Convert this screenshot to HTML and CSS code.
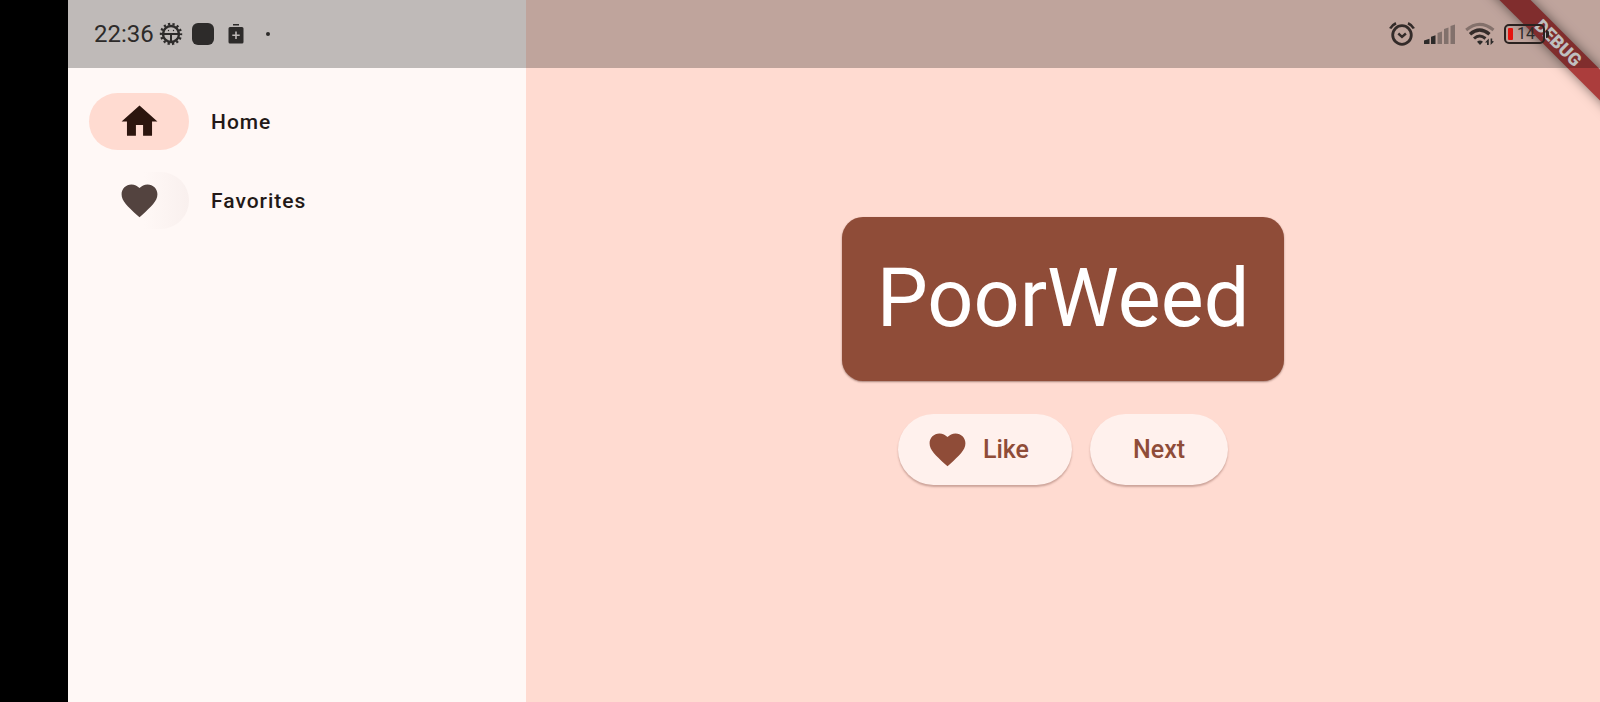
FILE: index.html
```html
<!DOCTYPE html>
<html lang="en">
<head>
<meta charset="utf-8">
<title>PoorWeed</title>
<link rel="stylesheet" href="styles.css">
</head>
<body>
<div class="screen">
  <div class="cutout"></div>
  <div class="app">
    <nav class="rail" aria-label="Main">
      <button class="rail-item rail-item-selected" type="button">
        <span class="indicator"><svg class="icon" viewBox="0 0 24 24" aria-hidden="true"><path d="M10 20v-6h4v6h5v-8h3L12 3 2 12h3v8z"/></svg></span>
        <span>Home</span>
      </button>
      <button class="rail-item" type="button">
        <span class="indicator indicator-fading"><svg class="icon" viewBox="0 0 24 24" aria-hidden="true"><path d="M12 21.35l-1.45-1.32C5.4 15.36 2 12.28 2 8.5 2 5.42 4.42 3 7.5 3c1.74 0 3.41.81 4.5 2.09C13.09 3.81 14.76 3 16.5 3 19.58 3 22 5.42 22 8.5c0 3.78-3.4 6.86-8.55 11.54L12 21.35z"/></svg></span>
        <span>Favorites</span>
      </button>
    </nav>
    <main class="page">
      <h1 class="card">PoorWeed</h1>
      <div class="actions">
        <button class="action action-icon" type="button">
          <svg class="icon" viewBox="0 0 24 24" aria-hidden="true"><path d="M12 21.35l-1.45-1.32C5.4 15.36 2 12.28 2 8.5 2 5.42 4.42 3 7.5 3c1.74 0 3.41.81 4.5 2.09C13.09 3.81 14.76 3 16.5 3 19.58 3 22 5.42 22 8.5c0 3.78-3.4 6.86-8.55 11.54L12 21.35z"/></svg>
          <span>Like</span>
        </button>
        <button class="action" type="button">Next</button>
      </div>
    </main>
    <div class="banner"><span class="ribbon">DEBUG</span></div>
    <header class="status">
      <div class="status-group">
        <time class="clock">22:36</time>
        <svg class="status-gear" viewBox="0 0 24 24" aria-hidden="true">
          <circle cx="12" cy="12" r="10" fill="none" stroke="#2d2b2a" stroke-width="2.4" stroke-dasharray="2.2 2.288" stroke-dashoffset="1.1"/>
          <circle cx="12" cy="12" r="8" fill="none" stroke="#2d2b2a" stroke-width="2.4"/>
          <path d="M4 12h16M12 12v8" fill="none" stroke="#2d2b2a" stroke-width="2"/>
          <circle cx="9.500" cy="8.500" r=".7"/><circle cx="14.500" cy="8.500" r=".7"/>
        </svg>
        <span class="status-square"></span>
        <svg class="status-saver" viewBox="0 0 16 20" aria-hidden="true"><path fill-rule="evenodd" d="M5 0h6v1.500H5zM2 3h12a1.500 1.500 0 0 1 1.500 1.500v13.500a1.500 1.500 0 0 1-1.500 1.500H2A1.500 1.500 0 0 1 .5 18V4.500A1.500 1.500 0 0 1 2 3zM7.200 7.500v3H4.300v1.600h2.900v3h1.600v-3h2.900v-1.600H8.800v-3z"/></svg>
        <span class="status-dot"></span>
      </div>
      <div class="status-group status-system">
        <svg class="status-alarm" viewBox="0 0 26 24" fill="none" stroke="#332b29" aria-hidden="true">
          <circle cx="13" cy="13" r="9.300" stroke-width="2.800"/>
          <path d="M1.200 6.500Q3 3 7 1.200M24.800 6.500Q23 3 19 1.200" stroke-width="2.600"/>
          <path d="M9.300 11.500l3.700 3.400 3.900-3.400" stroke-width="2.400"/>
        </svg>
        <svg class="status-signal" viewBox="0 0 32 20" aria-hidden="true">
          <path d="M0 16.500l5.500-1.800V20H0zM7 12.800l4.500-1.500V20H7z"/>
          <path opacity=".42" d="M13.500 9l4.500-1.500V20h-4.500zM20 5l4.500-1.500V20H20zM26.500 2L31 .5V20h-4.500z"/>
        </svg>
        <svg class="status-wifi" viewBox="0 0 30 24" aria-hidden="true">
          <g fill="none" stroke="#332b29">
            <path d="M1.200 8Q14.500-3.200 28.500 8" stroke-width="3" opacity=".42"/>
            <path d="M5 12.200Q14.500 4 24.500 12.200" stroke-width="3.400"/>
            <path d="M9 16.500Q14.500 11.500 20.500 16.500" stroke-width="3"/>
          </g>
          <path d="M12 19.700q3-2.500 6 0l-3 3.200zM23.800 16.500V23h-1.800v-2.500h-2zM25.600 23v-6.500h1.600V19l1.800.5z"/>
        </svg>
        <div class="battery"><span class="battery-level"></span><span>14</span></div>
      </div>
    </header>
  </div>
</div>
</body>
</html>
```
FILE: styles.css
```css
* {
  box-sizing: border-box;
}

body {
  margin: 0;
  font-family: Roboto, "Liberation Sans", sans-serif;
  color: #231917;
}

button {
  margin: 0;
  border: 0;
  font: inherit;
  color: inherit;
  cursor: pointer;
}

svg {
  display: block;
  flex: none;
}

.screen {
  display: flex;
  min-height: 100vh;
  background: #000;
}

.cutout {
  flex: none;
  width: 68px;
}

.app {
  position: relative;
  display: flex;
  flex: 1;
  background: #ffdbd1;
}

.rail {
  display: flex;
  flex: none;
  flex-direction: column;
  gap: 22px;
  width: 458px;
  padding: 93px 21px 21px;
  background: #fff8f6;
}

.rail-item {
  display: flex;
  align-items: center;
  gap: 22px;
  padding: 0;
  background: none;
  font-size: 21px;
  font-weight: 500;
  letter-spacing: 1px;
  text-align: left;
}

.indicator {
  display: flex;
  align-items: center;
  justify-content: center;
  width: 100px;
  height: 57px;
  border-radius: 29px;
  color: #53433f;
}

.rail-item-selected .indicator {
  background: #ffdbd1;
  color: #2c150e;
}

.indicator-fading {
  background: linear-gradient(90deg, #fff8f6 55%, #f9f0ee);
}

.icon {
  width: 43px;
  height: 43px;
  fill: currentColor;
}

.page {
  display: flex;
  flex: 1;
  flex-direction: column;
  align-items: center;
  justify-content: center;
  gap: 33px;
}

.card {
  margin: 0;
  padding: 36px 35px;
  border-radius: 21px;
  background: #8f4c38;
  box-shadow: 0 1px 2px rgba(60, 20, 10, 0.45);
  color: #fff;
  font-size: 81px;
  font-weight: 400;
  line-height: 92px;
}

.actions {
  display: flex;
  gap: 18px;
}

.action {
  display: flex;
  align-items: center;
  gap: 14px;
  height: 71px;
  padding: 0 43px;
  border-radius: 36px;
  background: #fff1ed;
  box-shadow: 0 2px 2px rgba(90, 40, 30, 0.3);
  color: #8f4c38;
  font-size: 25px;
  font-weight: 500;
}

.action-icon {
  padding-left: 28px;
}

.banner {
  position: absolute;
  top: 0;
  right: 0;
  width: 140px;
  height: 140px;
  overflow: hidden;
}

.ribbon {
  position: absolute;
  top: 32px;
  right: -58px;
  width: 200px;
  background: #ab3d3c;
  box-shadow: 0 0 12px rgba(0, 0, 0, 0.5);
  color: #fff;
  font-size: 18px;
  font-weight: 900;
  line-height: 22px;
  text-align: center;
  transform: rotate(45deg);
}

.status {
  position: absolute;
  top: 0;
  left: 0;
  display: flex;
  align-items: center;
  justify-content: space-between;
  width: 100%;
  height: 68px;
  padding: 0 55px 0 26px;
  background: rgba(0, 0, 0, 0.25);
  color: #2d2b2a;
  fill: #2d2b2a;
}

.status-group {
  display: flex;
  align-items: center;
}

.status-system {
  gap: 9px;
}

.clock {
  font-size: 24px;
}

.status-gear {
  width: 24px;
  height: 24px;
  margin-left: 5px;
}

.status-square {
  width: 22px;
  height: 22px;
  margin-left: 9px;
  border-radius: 6px;
  background: #2d2b2a;
}

.status-saver {
  width: 16px;
  height: 20px;
  margin-left: 14px;
}

.status-dot {
  width: 4px;
  height: 4px;
  margin-left: 22px;
  border-radius: 2px;
  background: #2d2b2a;
}

.status-alarm {
  width: 26px;
  height: 24px;
}

.status-signal {
  width: 32px;
  height: 20px;
}

.status-wifi {
  width: 30px;
  height: 24px;
}

.battery {
  position: relative;
  display: flex;
  align-items: center;
  gap: 4px;
  width: 41px;
  height: 20px;
  padding-left: 2px;
  border: 2px solid #2a2220;
  border-radius: 5px;
  font-size: 16px;
  line-height: 16px;
}

.battery::after {
  content: "";
  position: absolute;
  top: 4px;
  right: -6px;
  width: 3px;
  height: 8px;
  border-radius: 0 3px 3px 0;
  background: #2a2220;
}

.battery-level {
  width: 5px;
  height: 12px;
  border-radius: 1px;
  background: #e5140f;
}
```
